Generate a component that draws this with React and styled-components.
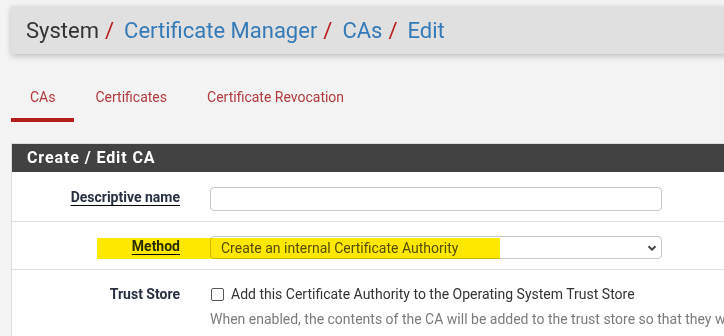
import React from "react";
import styled, { createGlobalStyle } from "styled-components";

const GlobalStyle = createGlobalStyle`
  html, body {
    margin: 0;
    padding: 0;
    background: #f3f3f3;
    overflow: hidden;
  }
  body {
    font-family: Roboto, "Liberation Sans", Arial, sans-serif;
    color: #333;
  }
  * { box-sizing: border-box; }
`;

const Page = styled.div`
  width: 1200px;
  padding: 6px 0 0 11px;
`;

const TitleBar = styled.div`
  height: 48px;
  background: #e0e0e0;
  display: flex;
  align-items: center;
  padding-left: 15px;
  font-size: 22px;
  box-shadow: 0 2px 6px rgba(0, 0, 0, 0.22);
`;

const Crumb = styled.span`
  color: ${(p) => (p.$link ? "#337ab7" : "#333")};
`;

const Sep = styled.span`
  color: #b71c1c;
  padding: 0 10px 0 6px;
`;

const TabList = styled.nav`
  display: flex;
  gap: 2px;
  margin-top: 23px;
`;

const Tab = styled.a`
  display: block;
  padding: 10px 19px 11px;
  font-size: 14px;
  line-height: 20px;
  color: #b03a3e;
  text-decoration: none;
  border-bottom: 4px solid ${(p) => (p.$active ? "#b71c1c" : "transparent")};
`;

const Panel = styled.section`
  margin-top: 21px;
  background: #fff;
  border: 1px solid #dcdcdc;
`;

const PanelHeader = styled.h2`
  margin: 0;
  height: 28px;
  line-height: 28px;
  background: #424242;
  color: #fff;
  font-size: 16px;
  font-weight: 700;
  letter-spacing: 0.9px;
  padding-left: 15px;
`;

const Row = styled.div`
  position: relative;
  display: flex;
  padding: ${(p) => p.$pad || "15px 0 10px"};
  border-bottom: 1px solid #dddddd;
`;

const Label = styled.div`
  width: 183px;
  flex: none;
  padding-right: 15px;
  text-align: right;
  font-size: 14px;
  font-weight: 700;
  line-height: ${(p) => p.$lh || "21px"};
  color: #283040;
`;

const LabelText = styled.span`
  text-decoration: ${(p) => (p.$required ? "underline" : "none")};
  text-underline-offset: 3px;
  text-decoration-skip-ink: none;
  text-decoration-color: #000;
`;

const Field = styled.div`
  margin-left: 15px;
  width: 452px;
  flex: none;
`;

const TextInput = styled.input`
  display: block;
  width: 452px;
  height: 24px;
  border: 1px solid #c8c8c8;
  border-radius: 4px;
  background: #fff;
  padding: 0 10px;
  font: inherit;
`;

const SelectBox = styled.div`
  display: flex;
  align-items: center;
  justify-content: space-between;
  width: 452px;
  height: 23px;
  border: 1px solid #c8c8c8;
  border-radius: 4px;
  padding: 0 3px 0 10px;
  font-size: 14px;
  color: #555;
  background: #fff;
`;

const Highlight = styled.div`
  position: absolute;
  left: 85px;
  top: 16px;
  width: 403px;
  height: 21px;
  background: #ffe800;
  mix-blend-mode: multiply;
  pointer-events: none;
`;

const CheckLine = styled.label`
  display: flex;
  align-items: center;
  gap: 7px;
  font-size: 14px;
  line-height: 20px;
  color: #333;
  white-space: nowrap;
  padding-left: 1px;
`;

const Box = styled.span`
  display: inline-block;
  width: 13px;
  height: 13px;
  border: 1px solid #555;
  border-radius: 2px;
  background: #fff;
`;

const Help = styled.div`
  margin-top: 5px;
  font-size: 14px;
  line-height: 20px;
  color: #7b7b7b;
  white-space: nowrap;
`;

const Chevron = () => (
  <svg width="12" height="12" viewBox="0 0 12 12" aria-hidden="true">
    <path d="M2.5 4.2 L6 7.6 L9.5 4.2" fill="none" stroke="#444" strokeWidth="2" />
  </svg>
);

export default function App() {
  return (
    <>
      <GlobalStyle />
      <Page>
        <TitleBar>
          <Crumb>System</Crumb>
          <Sep>/</Sep>
          <Crumb $link>Certificate Manager</Crumb>
          <Sep>/</Sep>
          <Crumb $link>CAs</Crumb>
          <Sep>/</Sep>
          <Crumb $link>Edit</Crumb>
        </TitleBar>

        <TabList>
          <Tab $active>CAs</Tab>
          <Tab>Certificates</Tab>
          <Tab>Certificate Revocation</Tab>
        </TabList>

        <Panel>
          <PanelHeader>Create / Edit CA</PanelHeader>

          <Row>
            <Label>
              <LabelText $required>Descriptive name</LabelText>
            </Label>
            <Field>
              <TextInput type="text" />
            </Field>
          </Row>

          <Row $pad="14px 0 10px">
            <Label>
              <LabelText $required>Method</LabelText>
            </Label>
            <Field>
              <SelectBox>
                <span>Create an internal Certificate Authority</span>
                <Chevron />
              </SelectBox>
            </Field>
            <Highlight />
          </Row>

          <Row $pad="14px 0 10px">
            <Label $lh="20px">
              <LabelText>Trust Store</LabelText>
            </Label>
            <Field>
              <CheckLine>
                <Box />
                Add this Certificate Authority to the Operating System Trust Store
              </CheckLine>
              <Help>
                When enabled, the contents of the CA will be added to the trust store so that they will be trusted by the operating system.
              </Help>
            </Field>
          </Row>
        </Panel>
      </Page>
    </>
  );
}
